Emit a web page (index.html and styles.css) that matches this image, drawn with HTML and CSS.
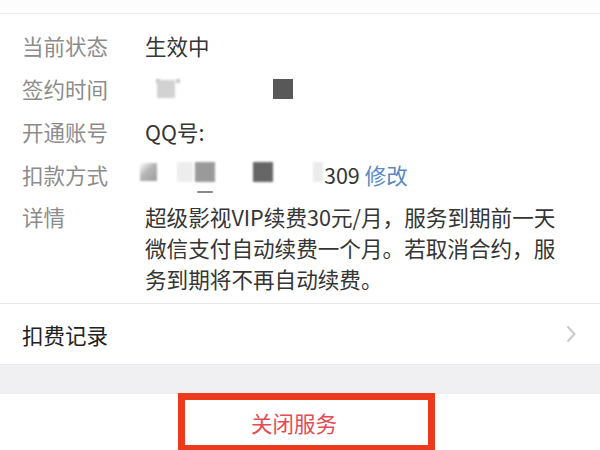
FILE: index.html
```html
<!DOCTYPE html>
<html lang="zh-CN">
<head>
<meta charset="utf-8">
<link rel="stylesheet" href="styles.css">
</head>
<body>
<div class="page">
  <div class="top-gap"></div>
  <section class="info">
    <div class="row">
      <div class="label">当前状态</div>
      <div class="value">生效中</div>
    </div>
    <div class="row">
      <div class="label">签约时间</div>
      <div class="value redacted">
        <span class="blk b-light1"></span>
        <span class="blk b-dark1"></span>
      </div>
    </div>
    <div class="row">
      <div class="label">开通账号</div>
      <div class="value">QQ号:</div>
    </div>
    <div class="row">
      <div class="label">扣款方式</div>
      <div class="value redacted">
        <span class="blk b-blur"></span>
        <span class="blk b-pale"></span>
        <span class="blk b-mid"></span>
        <span class="blk b-dark2"></span>
        <span class="blk b-pale2"></span>
        <span class="num">309</span>
        <span class="link">修改</span>
        <span class="dash"></span>
      </div>
    </div>
    <div class="row detail">
      <div class="label">详情</div>
      <div class="value desc">超级影视VIP续费30元/月，服务到期前一天微信支付自动续费一个月。若取消合约，服务到期将不再自动续费。</div>
    </div>
  </section>
  <div class="record">
    <span class="record-title">扣费记录</span>
    <svg class="chevron" width="10" height="18" viewBox="0 0 10 18"><polyline points="1.5,1.5 8.5,9 1.5,16.5" fill="none" stroke="#c9c9cc" stroke-width="2"/></svg>
  </div>
  <div class="band"></div>
  <div class="action">
    <span class="close-text">关闭服务</span>
    <div class="annot"></div>
  </div>
</div>
</body>
</html>
```

FILE: styles.css
```css
html, body {
  margin: 0;
  padding: 0;
  background: #ffffff;
}
body {
  width: 600px;
  height: 450px;
  overflow: hidden;
  font-family: "Noto Sans CJK SC", "Noto Sans", sans-serif;
}
.page {
  display: flex;
  flex-direction: column;
  height: 450px;
}
.top-gap {
  height: 13px;
  background: #fdfdfd;
  border-bottom: 1px solid #ebebeb;
  flex-shrink: 0;
}
.info {
  padding: 10px 0 9px 22px;
  border-bottom: 1px solid #e9e9e9;
  flex-shrink: 0;
}
.row {
  display: grid;
  grid-template-columns: 123px 1fr;
  font-size: 21.5px;
  line-height: 43px;
  height: 43px;
}
.label {
  color: #8c8c8c;
}
.value {
  color: #353535;
}
.redacted {
  display: flex;
  align-items: center;
  position: relative;
}
.blk {
  display: block;
  filter: blur(0.8px);
}
.b-light1 {
  margin-left: 12px;
  width: 18px;
  height: 18px;
  background: #d2d2d2;
  box-shadow: -8px -8px 0 -7px #bdbdbd, 12px -8px 0 -7px #c8c8c8;
}
.b-dark1 {
  margin-left: 98px;
  width: 20px;
  height: 20px;
  background: #585858;
  filter: none;
}
.b-blur {
  margin-left: -5px;
  width: 17px;
  height: 18px;
  background: linear-gradient(135deg, #ffffff 0%, #b5b5b5 45%, #9c9c9c 100%);
  margin-bottom: 6px;
}
.b-pale {
  margin-left: 20px;
  width: 16px;
  height: 20px;
  background: #ededed;
  margin-bottom: 6px;
}
.b-mid {
  margin-left: 2px;
  width: 20px;
  height: 20px;
  background: #9a9a9a;
  margin-bottom: 6px;
}
.b-dark2 {
  margin-left: 38px;
  width: 20px;
  height: 20px;
  background: #666666;
  margin-bottom: 6px;
}
.b-pale2 {
  margin-left: 40px;
  width: 10px;
  height: 20px;
  background: #ececec;
  margin-bottom: 6px;
}
.num {
  margin-left: 1px;
  color: #353535;
}
.link {
  margin-left: 5px;
  color: #5a88c2;
}
.dash {
  position: absolute;
  left: 52px;
  top: 38px;
  width: 16px;
  height: 2px;
  background: #8a8a8a;
  filter: blur(0.6px);
  border-radius: 1px;
}
.row.detail {
  height: auto;
  line-height: 31px;
  margin-top: 5px;
  font-size: 21.6px;
}
.desc {
  width: 424px;
}
.record {
  height: 60px;
  display: flex;
  align-items: center;
  justify-content: space-between;
  padding: 0 24px 0 22px;
  flex-shrink: 0;
}
.record-title {
  font-size: 21.5px;
  color: #222222;
}
.chevron {
  display: block;
}
.band {
  height: 29px;
  background: #f0f0f2;
  border-top: 1px solid #ececee;
  flex-shrink: 0;
}
.action {
  flex: 1;
  position: relative;
  display: flex;
  justify-content: center;
  padding: 16px 12px 0 0;
}
.close-text {
  font-size: 21.5px;
  line-height: 26px;
  height: 26px;
  color: #e64a55;
}
.annot {
  position: absolute;
  left: 178px;
  top: -1px;
  width: 243px;
  height: 45px;
  border: 7px solid #ee3a1c;
}
```
